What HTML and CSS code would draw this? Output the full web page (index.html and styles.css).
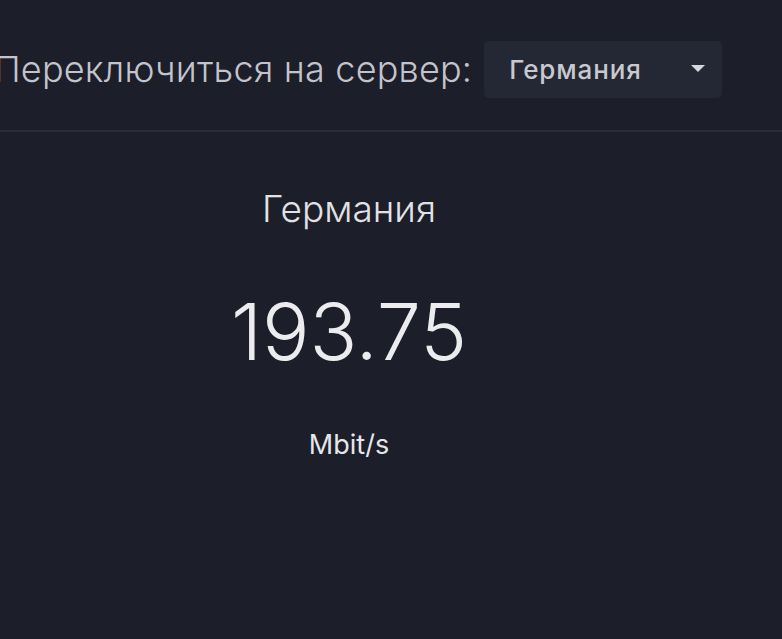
FILE: index.html
```html
<!DOCTYPE html>
<html lang="ru">
<head>
    <meta charset="UTF-8">
    <meta name="viewport" content="width=device-width, initial-scale=1.0">
    <title>Скорость сервера</title>
    <link rel="stylesheet" href="styles.css">
</head>
<body>
    <div class="topbar">
        <span class="switch-label">Переключиться на сервер:</span>
        <div class="select">
            <span>Германия</span>
            <svg class="caret" width="16" height="8" viewBox="0 0 16 8">
                <path d="M1 0 L15 0 L8 7 Z" fill="#d6d7dc"/>
            </svg>
        </div>
    </div>

    <div class="speed-panel">
        <div class="server-name">Германия</div>
        <div class="speed-value">193.75</div>
        <div class="speed-unit">Mbit/s</div>
    </div>
</body>
</html>
```

FILE: styles.css
```css
body {
    margin: 0;
    height: 100vh;
    background-color: #1c1e29;
    font-family: Inter, "Noto Sans", sans-serif;
    color: #e6e6ea;
    overflow: hidden;
}

.topbar {
    display: flex;
    align-items: center;
    height: 132px;
    padding-top: 8px;
    margin-left: -6px;
    border-bottom: 2px solid #2a2c39;
    gap: 12px;
    box-sizing: border-box;
}

.switch-label {
    font-size: 36px;
    font-weight: 300;
    color: #c3c4cb;
    letter-spacing: 0.2px;
}

.select {
    display: flex;
    align-items: center;
    justify-content: space-between;
    width: 238px;
    height: 57px;
    padding: 0 16px 0 25px;
    box-sizing: border-box;
    background-color: #242734;
    border-radius: 5px;
    font-size: 26px;
    font-weight: 500;
    letter-spacing: 0.9px;
    color: #c8c9cf;
}

.speed-panel {
    width: 698px;
    display: flex;
    flex-direction: column;
    align-items: center;
    padding-top: 54px;
}

.server-name {
    font-size: 37px;
    font-weight: 300;
    color: #e2e2e6;
}

.speed-value {
    margin-top: 61px;
    font-size: 79px;
    font-weight: 300;
    color: #ececef;
    line-height: 1;
}

.speed-unit {
    margin-top: 57px;
    font-size: 27px;
    font-weight: 400;
    color: #e6e6ea;
}
```
